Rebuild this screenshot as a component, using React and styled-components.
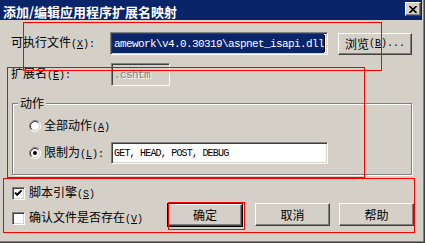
import React from "react";
import styled, { createGlobalStyle, css } from "styled-components";

const UI_FONT = `"Noto Sans CJK SC", "Noto Sans", sans-serif`;
const MONO = `"Liberation Mono", "DejaVu Sans Mono", monospace`;

const GlobalStyle = createGlobalStyle`
  html, body { margin: 0; padding: 0; background: #d4d0c8; }
  body { width: 425px; height: 243px; overflow: hidden; }
  *, *::before, *::after { box-sizing: border-box; }
`;

const Window = styled.div`
  position: relative;
  width: 425px;
  height: 243px;
  background: #d4d0c8;
  border-right: 1px solid #404040;
  border-bottom: 1px solid #404040;
  box-shadow: inset -1px -1px 0 #808080;
  padding-right: 2px;
  display: flex;
  flex-direction: column;
  font-family: ${UI_FONT};
  font-size: 12px;
  color: #000;
  overflow: hidden;
`;

const TitleBar = styled.div`
  flex: none;
  height: 20px;
  background: #0a246a;
  display: flex;
  align-items: flex-start;
  justify-content: space-between;
  padding: 0 1px 0 3px;
`;

const TitleText = styled.div`
  color: #fff;
  font-weight: 700;
  font-size: 13px;
  line-height: 13px;
  margin-top: 5px;
  white-space: nowrap;
`;

const CloseButton = styled.div`
  width: 16px;
  height: 14px;
  margin-top: 2px;
  background: #d4d0c8;
  border: 1px solid;
  border-color: #fff #404040 #404040 #fff;
  box-shadow: inset -1px -1px 0 #808080;
  display: flex;
  align-items: center;
  justify-content: center;
`;

const Body = styled.div`
  flex: 1;
  display: flex;
  flex-direction: column;
  padding: 0 8px 0 11px;
`;

const FieldRow = styled.div`
  display: flex;
  align-items: center;
  height: 23px;
  margin-top: ${(p) => p.$top}px;
`;

const FieldLabel = styled.div`
  flex: none;
  width: ${(p) => p.$w}px;
  white-space: nowrap;
  line-height: 14px;
`;

const Latin = styled.span`
  font-family: ${MONO};
  font-size: 10px;
`;

const Edit = styled.div`
  flex: none;
  width: ${(p) => p.$w}px;
  height: ${(p) => p.$h}px;
  border: 1px solid;
  border-color: #808080 #fff #fff #808080;
  box-shadow: inset 1px 1px 0 #404040, inset -1px -1px 0 #d4d0c8;
  background: ${(p) => (p.$disabled ? "#d4d0c8" : "#fff")};
  padding: 1px;
  display: flex;
  align-items: stretch;
  overflow: hidden;
`;

const Selected = styled.span`
  flex: 1;
  min-width: 0;
  display: flex;
  align-items: center;
  justify-content: flex-end;
  background: #0a246a;
  color: #fff;
  white-space: pre;
  font-family: ${MONO};
  font-size: 11px;
  letter-spacing: -0.6px;
`;

const Caret = styled.span`
  flex: none;
  width: 1px;
  margin: 1px 1px 1px 0;
  background: #000;
`;

const EditText = styled.span`
  display: flex;
  align-items: center;
  padding-left: 1px;
  white-space: pre;
  font-family: ${MONO};
  font-size: ${(p) => p.$size || 11}px;
  letter-spacing: ${(p) => p.$ls ?? -0.6}px;
  color: ${(p) => (p.$disabled ? "#808080" : "#000")};
  ${(p) =>
    p.$disabled &&
    css`
      text-shadow: 1px 1px 0 #fff;
    `}
`;

const Button = styled.button`
  flex: none;
  width: ${(p) => p.$w}px;
  height: ${(p) => p.$h}px;
  margin-left: ${(p) => p.$ml || 0}px;
  padding: 0;
  font-family: ${UI_FONT};
  font-size: 12px;
  line-height: 1;
  color: #000;
  background: #d4d0c8;
  border: 1px solid;
  border-color: #fff #404040 #404040 #fff;
  box-shadow: inset -1px -1px 0 #808080, inset 1px 1px 0 #d4d0c8;
  display: flex;
  align-items: center;
  justify-content: center;
  white-space: nowrap;
  ${(p) =>
    p.$default &&
    css`
      border: 1px solid #000;
      box-shadow: inset 1px 1px 0 #fff, inset -1px -1px 0 #404040,
        inset -2px -2px 0 #808080;
    `}
`;

const Group = styled.div`
  position: relative;
  flex: none;
  margin: 17px 0 0 1px;
  width: 400px;
  height: 72px;
  border: 1px solid #808080;
  box-shadow: inset 1px 1px 0 #fff, 1px 1px 0 #fff;
  padding: 14px 0 0 16px;
`;

const Legend = styled.span`
  position: absolute;
  top: -8px;
  left: 5px;
  padding: 0 2px;
  background: #d4d0c8;
  line-height: 14px;
`;

const OptionRow = styled.div`
  display: flex;
  align-items: center;
  height: ${(p) => p.$h}px;
  margin-top: ${(p) => p.$top || 0}px;
`;

const OptionText = styled.span`
  flex: none;
  margin-left: 3px;
  width: ${(p) => (p.$w ? `${p.$w}px` : "auto")};
  white-space: nowrap;
  line-height: 14px;
`;

const Footer = styled.div`
  display: flex;
  align-items: flex-start;
`;

const Checks = styled.div`
  display: flex;
  flex-direction: column;
  gap: 12px;
  margin: 12px 0 0 1px;
`;

const CheckRow = styled.div`
  display: flex;
  align-items: center;
  gap: 4px;
  height: 13px;
  white-space: nowrap;
  line-height: 14px;
`;

const CheckBox = styled.span`
  flex: none;
  width: 13px;
  height: 13px;
  border: 1px solid;
  border-color: #808080 #fff #fff #808080;
  box-shadow: inset 1px 1px 0 #404040, inset -1px -1px 0 #d4d0c8;
  background: #fff;
  display: flex;
  align-items: center;
  justify-content: center;
`;

const Buttons = styled.div`
  display: flex;
  margin: 28px 0 0 auto;
`;

const Mark = styled.div`
  position: absolute;
  left: ${(p) => p.$x}px;
  top: ${(p) => p.$y}px;
  width: ${(p) => p.$w}px;
  height: ${(p) => p.$h}px;
  border: 1px solid #ff0000;
  pointer-events: none;
`;

const Key = ({ k, tail = "" }) => (
  <Latin>
    (<u>{k}</u>){tail}
  </Latin>
);

const RadioIcon = ({ checked }) => (
  <svg width="12" height="12" viewBox="0 0 12 12" style={{ flex: "none" }}>
    <circle cx="6" cy="6" r="4.2" fill="#fff" />
    <path d="M2.11 9.89 A5.5 5.5 0 0 1 9.89 2.11" stroke="#808080" fill="none" />
    <path d="M9.89 2.11 A5.5 5.5 0 0 1 2.11 9.89" stroke="#fff" fill="none" />
    <path d="M2.82 9.18 A4.5 4.5 0 0 1 9.18 2.82" stroke="#404040" fill="none" />
    <path d="M9.18 2.82 A4.5 4.5 0 0 1 2.82 9.18" stroke="#d4d0c8" fill="none" />
    {checked && <circle cx="6" cy="6" r="2" fill="#000" />}
  </svg>
);

const CheckIcon = () => (
  <svg width="9" height="9" viewBox="0 0 9 9">
    <polyline points="1,3.6 3.2,5.8 7.6,1.4" fill="none" stroke="#000" strokeWidth="2" />
  </svg>
);

const CloseIcon = () => (
  <svg width="8" height="7" viewBox="0 0 8 7">
    <path d="M0.5 0 L7.5 7 M7.5 0 L0.5 7" stroke="#000" strokeWidth="1.6" fill="none" />
  </svg>
);

export default function App() {
  return (
    <>
      <GlobalStyle />
      <Window>
        <TitleBar>
          <TitleText>添加/编辑应用程序扩展名映射</TitleText>
          <CloseButton>
            <CloseIcon />
          </CloseButton>
        </TitleBar>
        <Body>
          <FieldRow $top={12}>
            <FieldLabel $w={99}>
              可执行文件<Key k="X" tail=":" />
            </FieldLabel>
            <Edit $w={218} $h={23}>
              <Selected>amework\v4.0.30319\aspnet_isapi.dll</Selected>
              <Caret />
            </Edit>
            <Button $w={74} $h={22} $ml={10}>
              浏览<Key k="B" tail="..." />
            </Button>
          </FieldRow>

          <FieldRow $top={8}>
            <FieldLabel $w={100}>
              扩展名<Key k="E" tail=":" />
            </FieldLabel>
            <Edit $w={59} $h={23} $disabled>
              <EditText $disabled>.cshtm</EditText>
            </Edit>
          </FieldRow>

          <Group>
            <Legend>动作</Legend>
            <OptionRow $h={16}>
              <RadioIcon />
              <OptionText>
                全部动作<Key k="A" />
              </OptionText>
            </OptionRow>
            <OptionRow $h={22} $top={8}>
              <RadioIcon checked />
              <OptionText $w={67}>
                限制为<Key k="L" tail=":" />
              </OptionText>
              <Edit $w={217} $h={22}>
                <EditText $size={10} $ls={-0.8}>GET, HEAD, POST, DEBUG</EditText>
              </Edit>
            </OptionRow>
          </Group>

          <Footer>
            <Checks>
              <CheckRow>
                <CheckBox>
                  <CheckIcon />
                </CheckBox>
                <span>
                  脚本引擎<Key k="S" />
                </span>
              </CheckRow>
              <CheckRow>
                <CheckBox />
                <span>
                  确认文件是否存在<Key k="V" />
                </span>
              </CheckRow>
            </Checks>
            <Buttons>
              <Button $w={76} $h={24} $default>
                确定
              </Button>
              <Button $w={75} $h={23} $ml={12}>
                取消
              </Button>
              <Button $w={75} $h={23} $ml={9}>
                帮助
              </Button>
            </Buttons>
          </Footer>
        </Body>

        <Mark $x={23} $y={22} $w={359} $h={49} />
        <Mark $x={7} $y={67} $w={358} $h={111} />
        <Mark $x={3} $y={178} $w={412} $h={55} />
        <Mark $x={168} $y={202} $w={77} $h={28} />
      </Window>
    </>
  );
}
